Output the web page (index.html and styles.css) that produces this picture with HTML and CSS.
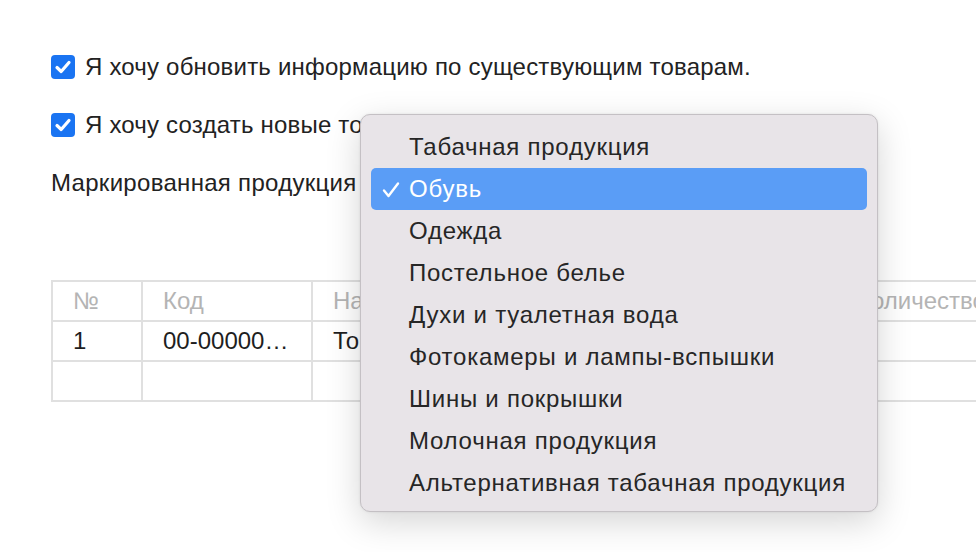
FILE: index.html
```html
<!DOCTYPE html>
<html lang="ru">
<head>
    <meta charset="UTF-8">
    <meta name="viewport" content="width=device-width, initial-scale=1.0">
    <title>Загрузка товаров</title>
    <link rel="stylesheet" href="styles.css">
</head>
<body>
    <div class="page">
        <label class="check-row">
            <span class="checkbox">
                <svg viewBox="0 0 24 24" width="24" height="24"><polyline points="6,12.5 10.2,16.5 18,7.5" fill="none" stroke="#fff" stroke-width="3.2" stroke-linecap="round" stroke-linejoin="round"/></svg>
            </span>
            <span class="check-text">Я хочу обновить информацию по существующим товарам.</span>
        </label>

        <label class="check-row">
            <span class="checkbox">
                <svg viewBox="0 0 24 24" width="24" height="24"><polyline points="6,12.5 10.2,16.5 18,7.5" fill="none" stroke="#fff" stroke-width="3.2" stroke-linecap="round" stroke-linejoin="round"/></svg>
            </span>
            <span class="check-text">Я хочу создать новые товары.</span>
        </label>

        <div class="field-row">
            <span class="field-label">Маркированная продукция</span>
        </div>

        <table class="goods">
            <colgroup>
                <col style="width: 90px">
                <col style="width: 170px">
                <col style="width: 524px">
                <col style="width: 171px">
            </colgroup>
            <thead>
                <tr>
                    <th>№</th>
                    <th>Код</th>
                    <th>Наименование</th>
                    <th>Количество</th>
                </tr>
            </thead>
            <tbody>
                <tr>
                    <td>1</td>
                    <td>00-00000…</td>
                    <td>Товар</td>
                    <td class="num">1</td>
                </tr>
                <tr>
                    <td></td>
                    <td></td>
                    <td></td>
                    <td></td>
                </tr>
            </tbody>
        </table>
    </div>

    <!-- Popup list of the select -->
    <div class="menu">
        <div class="menu-item">Табачная продукция</div>
        <div class="menu-item selected">
            <svg class="tick" viewBox="0 0 18 18" width="18" height="18"><polyline points="2,9.5 6.5,15 16,2.5" fill="none" stroke="#fff" stroke-width="2.4" stroke-linecap="round" stroke-linejoin="round"/></svg>
            Обувь
        </div>
        <div class="menu-item">Одежда</div>
        <div class="menu-item">Постельное белье</div>
        <div class="menu-item">Духи и туалетная вода</div>
        <div class="menu-item">Фотокамеры и лампы-вспышки</div>
        <div class="menu-item">Шины и покрышки</div>
        <div class="menu-item">Молочная продукция</div>
        <div class="menu-item">Альтернативная табачная продукция</div>
    </div>
</body>
</html>
```

FILE: styles.css
```css
* {
    margin: 0;
    padding: 0;
    box-sizing: border-box;
}

html, body {
    width: 976px;
    height: 552px;
    overflow: hidden;
    background: #ffffff;
    font-family: "Liberation Sans", Arial, sans-serif;
    color: #222222;
}

.page {
    padding: 55px 0 0 51px;
}

.check-row {
    display: flex;
    align-items: center;
    gap: 10px;
    height: 24px;
    margin-bottom: 34px;
}

.checkbox {
    width: 24px;
    height: 24px;
    border-radius: 4px;
    background: #1a74f2;
    display: flex;
    flex-shrink: 0;
}

.check-text {
    font-size: 24px;
    letter-spacing: 0.2px;
}

.field-row {
    height: 24px;
    display: flex;
    align-items: center;
    margin-top: 11px;
}

.field-label {
    font-size: 24px;
    letter-spacing: 0.3px;
}

/* Table of goods, runs past the right edge */
.goods {
    margin-top: 85px;
    border-collapse: collapse;
    table-layout: fixed;
    width: 955px;
    font-size: 24px;
}

.goods th,
.goods td {
    height: 40px;
    border: 2px solid #e0e0e0;
    padding: 0 20px;
    text-align: left;
    white-space: nowrap;
    overflow: hidden;
}

.goods th {
    font-weight: normal;
    color: #b4b4b4;
}

.goods td {
    color: #1e1e1e;
}

.goods td.num {
    text-align: right;
    padding-right: 17px;
}

/* Dropdown */
.menu {
    position: absolute;
    left: 360px;
    top: 114px;
    width: 518px;
    height: 398px;
    padding: 11px 10px;
    background: #e8e4e8;
    border: 1px solid #c4c0c4;
    border-radius: 10px;
    box-shadow: 0 10px 34px rgba(0, 0, 0, 0.17), 0 0 3px rgba(0, 0, 0, 0.08);
}

.menu-item {
    position: relative;
    height: 42px;
    line-height: 42px;
    padding-left: 38px;
    font-size: 24px;
    letter-spacing: 0.75px;
    color: #262626;
    border-radius: 5px;
}

.menu-item.selected {
    background: #5a9df6;
    color: #ffffff;
}

.tick {
    position: absolute;
    left: 11px;
    top: 13px;
}
```
